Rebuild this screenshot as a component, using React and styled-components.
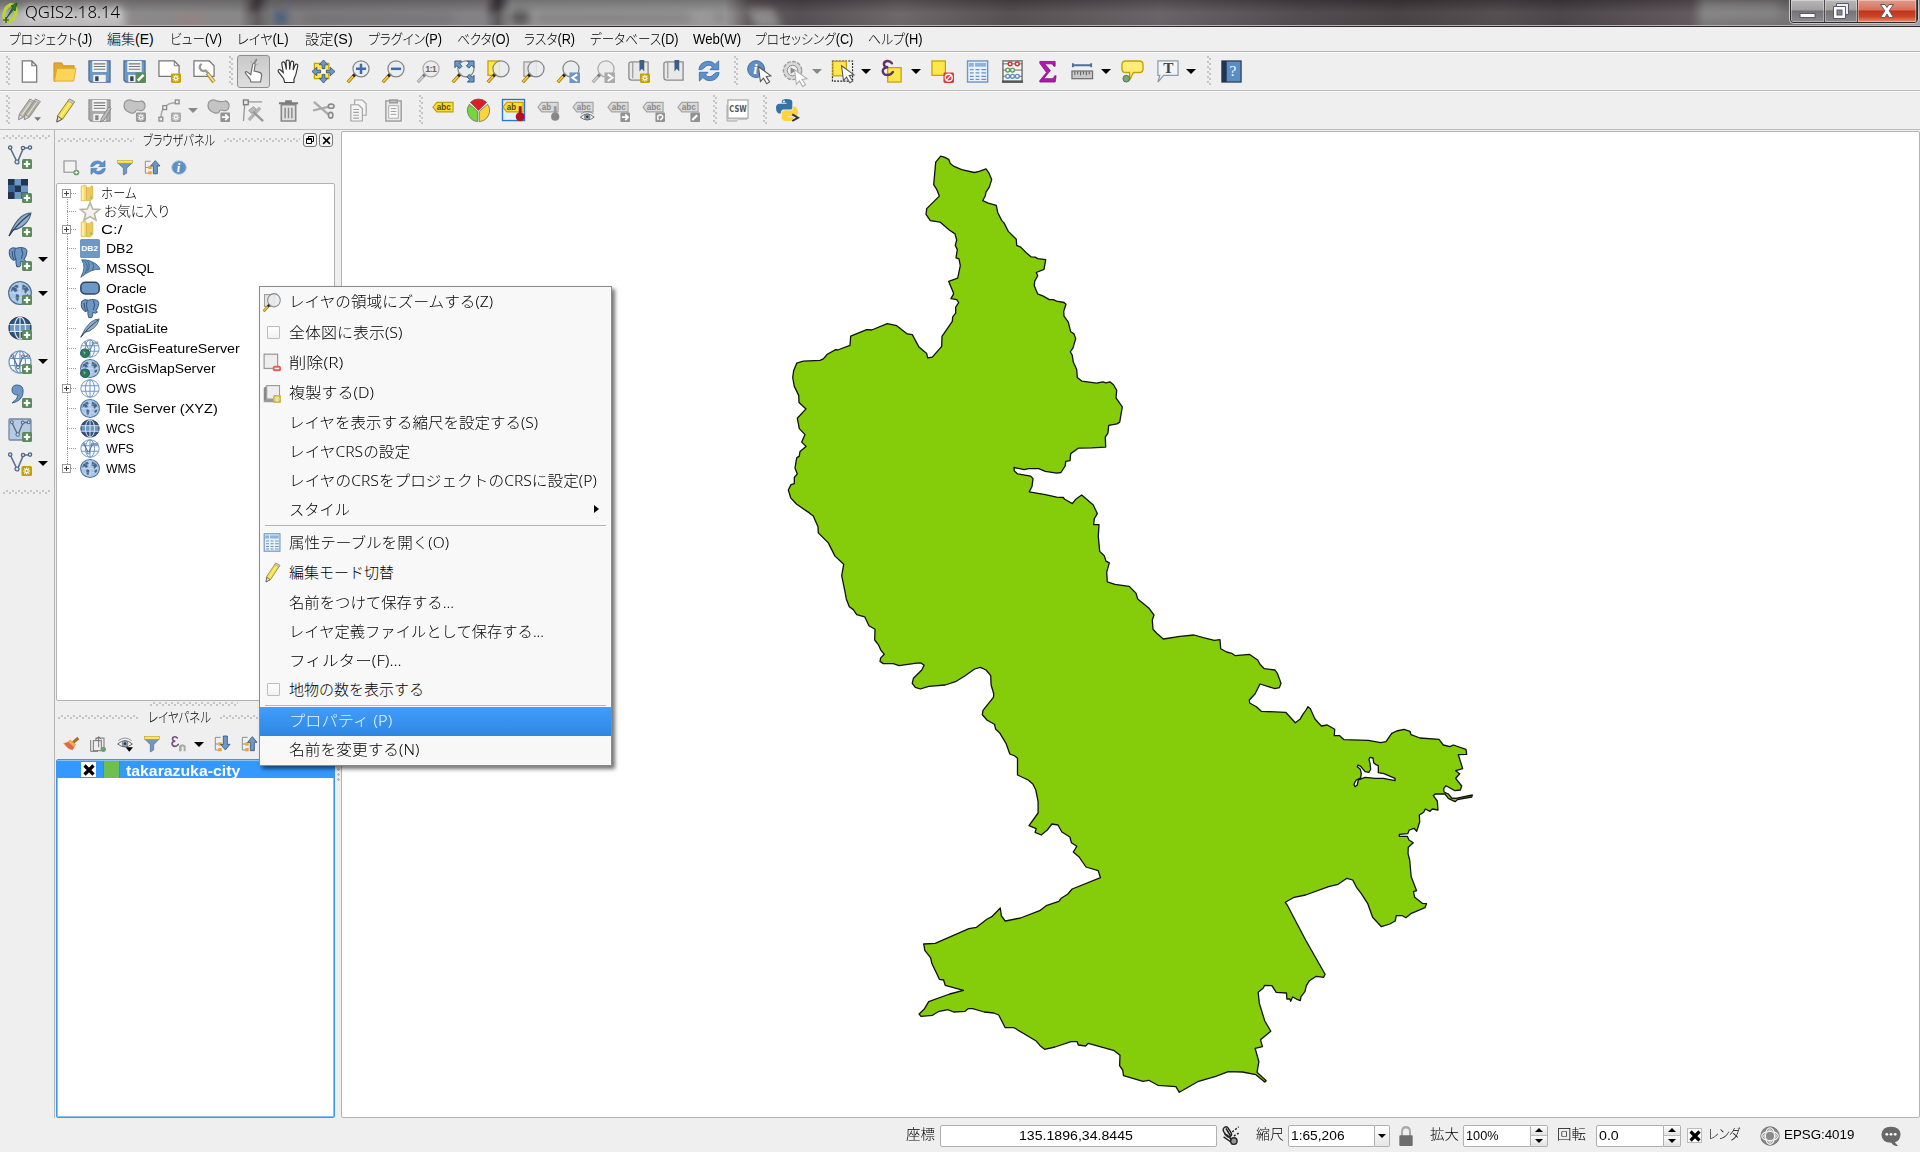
import React, { useLayoutEffect, useRef, useState } from "react";
import styled, { createGlobalStyle, css } from "styled-components";

const ui = `"Liberation Sans", "Noto Sans CJK JP", sans-serif`;
const menuFont = `"Noto Sans", "Noto Sans CJK JP", sans-serif`;

const Global = createGlobalStyle`
  * { box-sizing: border-box; }
  html, body { margin: 0; padding: 0; overflow: hidden; }
  body { font-family: ${ui}; font-size: 14px; font-weight: 300; color: #000; background: #efefef; }
  svg { display: block; flex: none; overflow: visible; }
`;

/* ---------- text fitted to a column width ---------- */
const FitBox = styled.span`
  display: block;
  flex: none;
  width: ${(p) => p.$w}px;
  white-space: pre;
  line-height: 1.2;
  font-feature-settings: ${(p) => (p.$palt ? '"palt"' : "normal")};
`;
const FitInner = styled.span`
  display: inline-block;
  transform-origin: 0 50%;
`;
function Fit({ w, palt, children, className }) {
  const ref = useRef(null);
  const [s, setS] = useState(1);
  useLayoutEffect(() => {
    if (ref.current) setS(w / ref.current.offsetWidth);
  }, [w]);
  return (
    <FitBox $w={w} $palt={palt} className={className}>
      <FitInner ref={ref} style={{ transform: `scaleX(${s})` }}>{children}</FitInner>
    </FitBox>
  );
}

/* ---------- icon pieces ---------- */
const G = "#5a8c5a";
const B = "#6d97c4";
const BD = "#3c5f88";
const Y = "#fde74c";
const YD = "#c4a000";

const PlusBadge = () => (
  <g>
    <rect x="14" y="14" width="10" height="10" rx="1.5" fill={G} />
    <path d="M19 15.8v6.400M15.800 19h6.400" stroke="#fff" strokeWidth="2.2" />
  </g>
);
const StarBadge = ({ c = YD }) => (
  <g>
    <rect x="13.500" y="14" width="10.500" height="10" rx="1.500" fill={c} />
    <path d="M18.700 15.400v7.200M15.200 19h7M16.200 16.400l5 5.200M21.200 16.400l-5 5.200" stroke="#fff" strokeWidth="1.100" />
    <circle cx="18.700" cy="19" r="1" fill={c} />
  </g>
);
const Mag = ({ gray, children }) => (
  <g>
    <path d="M.8 23.200L8.600 14.600" stroke={gray ? "#999" : "#8a6a10"} strokeWidth="3.400" />
    <path d="M1 22.800L6.400 17" stroke={gray ? "#ccc" : "#fcc52c"} strokeWidth="2" />
    <path d="M6.500 17l3-3.200" stroke={gray ? "#777" : "#222"} strokeWidth="3" />
    <circle cx="14.600" cy="9.200" r="8.400" fill={gray ? "#ebebeb" : "#e9ecee"} fillOpacity=".85" stroke={gray ? "#aaa" : "#858585"} strokeWidth="1.300" />
    {children}
  </g>
);
const Cursor = ({ x = 10, y = 6, c = "#555" }) => (
  <path transform={`translate(${x} ${y})`} d="M0 0l13 9.500-5 .8 3.600 5.600-3 1.800-3.400-5.800-3.200 3.500z" fill="#fff" stroke={c} strokeWidth="1.100" />
);
const VLine = () => (
  <g fill="none">
    <path d="M2.500 3.500L9 17M10 16L15 4M16 3h5" stroke="#566f8d" strokeWidth="1.600" />
    <g fill="#d5e2f0" stroke="#4d6580" strokeWidth="1.200">
      <circle cx="2.200" cy="2.600" r="1.700" /><circle cx="15" cy="3" r="1.700" />
      <circle cx="22" cy="2.600" r="1.700" /><circle cx="9" cy="17" r="2" />
    </g>
  </g>
);
const GlobeLand = () => (
  <g>
    <circle cx="12" cy="12" r="11.300" fill="#a9c6e6" stroke="#4d6f98" strokeWidth="1.300" />
    <path d="M4 6.500q3-3 5.500-2.500l1 2-2 2 1 2-2.500 1-2-2-2.500 2zM8 13l3 1 .5 2.500-2 4-2-3zM14.500 3.500l4.500 2 2 3.500-2 1-1 3-1.500-1 0-3-3-1 1-2.500zM17 15l3-2 .5 2.500-2.500 2.500z" fill="#45658c" />
    <path d="M1 12h22M12 1v22M4 5q8 5 16 0M4 19q8-5 16 0" stroke="#fff" strokeOpacity=".4" fill="none" strokeWidth=".8" />
  </g>
);
const GlobeGrid = ({ dark }) => (
  <g fill="none" stroke={dark ? "#dfeaf6" : "#6d97c4"} strokeWidth="1.200">
    <circle cx="12" cy="12" r="11" fill={dark ? "#33557f" : "#f8fbff"} stroke={dark ? "#29405f" : "#6d97c4"} />
    {dark && <path d="M2 9h20v6H2z" fill="#6d97c4" stroke="none" />}
    <ellipse cx="12" cy="12" rx="5.500" ry="11" /><path d="M1.500 8.500h21M1.500 15.500h21M12 1v22" />
  </g>
);
const Elephant = () => (
  <g stroke="#2c4a6e" strokeWidth="1.100" fill={B}>
    <path d="M2 3q3-3.500 8-1.500Q14 0 18 1q5 1 4.500 5-.5 5-3.500 9l2 1.500-2.500 1.500-3-1q0 5-1.500 6.500h-3.500q-1.500-4-1-9-2 2-4 1Q0 11 2 3z" />
    <path d="M8.500 2q-1.500 5 0 10l1 2.500M16 2q3 5 0 12M5 5q0 6 2 10" fill="none" />
  </g>
);
const Feather = () => (
  <g>
    <path d="M1 23Q6 10 13 4q5-4 10-4-1 6-6 11-5 5-12 6z" fill="#8fb0d4" stroke="#4a5f7a" strokeWidth="1.100" />
    <path d="M1 23Q9 11 22 1" stroke="#333f50" strokeWidth="1.200" fill="none" />
  </g>
);
const Label = ({ c = "#dadada", s = "#a5a5a5", t = "abc", tc = "#888" }) => (
  <g>
    <path d="M5 3.500h17v10H5L1 8.500z" fill={c} stroke={s} strokeWidth="1.200" />
    <text x="5" y="11.400" fontSize="8.500" fontWeight="700" fontFamily="Liberation Sans" fill={tc} textLength={t.length * 4.900} lengthAdjust="spacingAndGlyphs">{t}</text>
  </g>
);
const Blob = () => (
  <path d="M2 3q4-3.500 8-1 5 1.500 9 0 4.500 1 4 6-1 5-6 4-3-1.500-4 1-1 2.500-5 1.500Q-1.500 11 2 3z" fill="#c4c4c4" stroke="#959595" strokeWidth="1.200" />
);
const GrayBadge = ({ children }) => (
  <g><rect x="14" y="14" width="10" height="10" rx="1" fill="#929292" />{children}</g>
);
const Pencil = ({ c1 = "#f5dc4a", c2 = "#8a7a30", tip = "#444" }) => (
  <g>
    <path d="M17 0l5.500 3L10 21l-6 3 1-7z" fill={c1} stroke={c2} strokeWidth="1" />
    <path d="M19.500 2L7.500 19" stroke="#fff8b0" strokeOpacity=".7" strokeWidth="1.400" />
    <path d="M5 18L4 24l5.500-3z" fill="#ddd" stroke={tip} strokeWidth=".8" /><path d="M15.800 2l5.200 3 1.500-2L17 0z" fill="#ccc" stroke="#888" strokeWidth=".6" />
  </g>
);
const Bubble = ({ fill, stroke }) => <path d="M5 1h14q4 0 4 4v4q0 4-4 4h-6l-4 8 0-8H5q-4 0-4-4V5q0-4 4-4z" fill={fill} stroke={stroke} strokeWidth="1.400" />;
const Refresh = () => (
  <g fill="#5f92cc" stroke="#386aa6" strokeWidth=".9">
    <path d="M1 10.500Q2 2 11 1.400q5 0 7.600 3.400L22.500 1v9.600H13l3-3Q11 3 6.200 9q-1 1.500-5.200 1.500z" />
    <path d="M23 13.500Q22 22 13 22.600q-5 0-7.600-3.400L1.500 23v-9.600H11l-3 3q5 4.600 9.800-1.400 1-1.500 5.200-1.500z" />
  </g>
);
const Floppy = ({ gray }) => (
  <g>
    <path d="M1 1h22v22H3l-2-2z" fill={gray ? "#a9a9a9" : B} stroke={gray ? "#929292" : "#4a6c96"} strokeWidth="1.300" />
    <rect x="4.500" y="1" width="15" height="11.500" fill="#f3f3f3" />
    <path d="M6 4h12M6 6.800h12M6 9.600h12" stroke="#777" strokeWidth="1.200" />
    <rect x="5.500" y="15.500" width="13" height="7.500" fill="#f1f1f1" /><rect x="7.500" y="17" width="3.500" height="5" fill={gray ? "#888" : "#345"} />
  </g>
);
const Book = () => (
  <g><path d="M2 4q0-2 3-2h17v19H5q-3 0-3-3z" fill="#e9e9e9" stroke="#8c8c8c" strokeWidth="1.400" /><path d="M6 2v17" stroke="#9b9b9b" strokeWidth="1.300" /><path d="M13 0h5v12l-2.500-3-2.500 3z" fill={BD} /></g>
);
const Sq = ({ x = 1, y = 2 }) => <rect x={x} y={y} width="14" height="15" fill={Y} stroke={YD} strokeWidth="1.300" />;
const Table = () => (
  <g><rect x="1.600" y="1" width="21" height="22" fill="#e9f2fb" stroke={B} strokeWidth="1.500" /><path d="M3 3h18v4H3z" fill="#8db3dc" /><path d="M4 10h4M10 10h4M16 10h5M4 13.500h4M10 13.500h4M16 13.500h5M4 17h4M10 17h4M16 17h5M4 20.300h4M10 20.300h4M16 20.300h5" stroke="#6b92bf" strokeWidth="1.300" /><path d="M8.700 2.500v5" stroke="#fff" /></g>
);
const Eye = ({ c = "#666" }) => (
  <g><path d="M1 12Q12 2 23 12 12 21 1 12z" fill="#f6f6f6" stroke={c} strokeWidth="1.500" /><circle cx="12" cy="11.500" r="4.500" fill="#86a9cc" stroke={c} /><circle cx="12" cy="11.500" r="2" fill="#333" /><path d="M2 7Q12-1 22 7" stroke={c} fill="none" /></g>
);
const TreeArrow = ({ up }) => (
  <g><path d="M2 2h8M2 2v19h9M2 12h5" stroke="#888" fill="none" strokeWidth="1.400" /><rect x="6.500" y="9.500" width="5" height="5" fill="#f2a12e" /><rect x="6.500" y="18" width="5" height="5" fill="#f2a12e" /><path transform={up ? "" : "matrix(1 0 0 -1 0 22)"} d="M17 1l7 8.500h-4V22h-6V9.500h-4z" fill="#6d97c4" stroke="#34567f" strokeWidth="1.300" /></g>
);
const Funnel = () => (<g><path d="M1.500 5h21l-8 8v8l-5 3V13z" fill={B} stroke="#4a6f9a" strokeWidth="1" /><rect x="1" y="1" width="22" height="4" fill={Y} stroke="#b79e1c" strokeWidth=".9" /></g>);
const Hand = () => (
  <path d="M8 23.500l-1-4-5.500-7q-1-3 1.500-2.500L6.500 13 5 4q0-2 1.500-2T8.500 4l1.300 6L9.500 2q0-2 1.700-2t1.700 2l.3 8 1-7q.4-2 1.900-1.800 1.600.3 1.300 2.300l-.6 7 2-5q.8-1.500 2.100-1 1.200.6.7 2.200L19.700 15l-2 5v3.500z" fill="#fff" stroke="#333" strokeWidth="1.200" />
);

const ICONS = {
  newDoc: <path d="M4.500 1h10l5 5v17h-15zM14.500 1v5h5" fill="#fff" stroke="#777" strokeWidth="1.300" />,
  open: <g><path d="M1 3h8l2 3h11v4H5L3 22H1z" fill="#dfa92b" stroke="#c8921e" /><path d="M4 9h20l-2.500 13H1.500z" fill="#fbd458" stroke="#e0ab2e" /></g>,
  save: <Floppy />,
  saveAs: <g><Floppy /><rect x="13" y="13" width="11" height="11" rx="1.500" fill={G} /><path d="M15.500 21.500l6-6" stroke="#fff" strokeWidth="2.500" /></g>,
  composer: <g><path d="M1 1h16l5 5v11H1z" fill="#fff" stroke="#777" strokeWidth="1.300" /><path d="M17 1v5h5" fill="none" stroke="#777" /><StarBadge /></g>,
  manager: <g><path d="M1 1h16l5 5v11H1z" fill="#fff" stroke="#777" strokeWidth="1.300" /><path d="M9 4q-4 3 0 7 2 1 4 0l3 3" fill="none" stroke="#999" strokeWidth="2.500" /><path d="M15 14l7 9" stroke="#a88a2a" strokeWidth="4" /><path d="M15.500 14.500l6.500 8" stroke="#f4dc88" strokeWidth="2" /></g>,
  touch: <g><path d="M8.500 24q0-3-3-6l-3-4q0-2 2-1l4 3 2-11q.5-2 2-1.500 1 .5.600 2.500l-1 6 6 1.500q3 1 2 5l-1 5.500z" fill="#fff" stroke="#666" strokeWidth="1.200" /><path d="M12 4l3-5" stroke="#888" strokeWidth="2" /><path d="M10 3.500q-2-1-1-3M14 5q2 0 3-1" stroke="#aaa" fill="none" /></g>,
  hand: <Hand />,
  panSel: <g><rect x="2.500" y="3.500" width="15" height="16" fill={Y} stroke={YD} strokeWidth="1.300" /><path d="M12 1.500v21M1.500 12h21" stroke="#fff" strokeWidth="5" strokeOpacity=".7" /><g fill={B} stroke="#32527a" strokeWidth=".9"><path d="M12 0l4.500 5h-3v4h-3V5h-3zM12 24l4.500-5h-3v-4h-3v4h-3zM0 12l5-4.500v3h4v3H5v3zM24 12l-5-4.500v3h-4v3h4v3z" /></g></g>,
  zoomIn: <Mag><path d="M14.600 4v10.500M9.400 9.200h10.500" stroke="#3a6ca8" strokeWidth="2.600" /></Mag>,
  zoomOut: <Mag><path d="M9.400 9.200h10.500" stroke="#3a6ca8" strokeWidth="2.600" /></Mag>,
  zoomOne: <Mag gray><text x="8.700" y="12.800" fontSize="9.500" fontWeight="700" fill="#666" fontFamily="Liberation Sans" textLength="12">1:1</text></Mag>,
  zoomFull: <g><Mag /><g fill={B} stroke="#34567f" strokeWidth="1"><path d="M3 1h7L7.500 3.500l3 3-2.500 2.500-3-3L3 8zM23 1v7l-2.500-2.500-3 3L15 6l3-3-2-2zM23 23h-7l2.500-2.500-3-3L18 15l3 3 2-2z" /></g></g>,
  zoomSel: <g><rect x="1" y="1" width="12" height="15" fill={Y} stroke={YD} strokeWidth="1.300" /><Mag /></g>,
  zoomLayer: <g><rect x="2" y="2" width="13" height="15" fill="#e4e4e4" stroke="#999" strokeWidth="1.300" /><Mag /></g>,
  zoomLast: <g><Mag /><rect x="13" y="13" width="11" height="11" fill={B} /><path d="M21 15l-5 3.500 5 3.500" stroke="#fff" strokeWidth="2" fill="none" /></g>,
  zoomNext: <g><Mag gray /><rect x="13" y="13" width="11" height="11" fill="#aaa" /><path d="M16.500 15l5 3.500-5 3.500" stroke="#fff" strokeWidth="2" fill="none" /></g>,
  bookNew: <g><Book /><StarBadge /></g>,
  book: <Book />,
  refresh: <Refresh />,
  identify: <g><circle cx="9.500" cy="9.500" r="8.800" fill="#5f8fc4" stroke="#41699a" /><text x="6.500" y="15" fontSize="16" fontStyle="italic" fontWeight="700" fontFamily="Liberation Serif" fill="#fff">i</text><Cursor x={12} y={7} /></g>,
  action: <g><circle cx="11" cy="11" r="9.500" fill="#d9d9d9" stroke="#9c9c9c" strokeWidth="1.500" strokeDasharray="4 1.500" /><circle cx="11" cy="11" r="5.500" fill="#eee" stroke="#888" /><path d="M9 7.500l5 3.500-5 3.500z" fill="#888" /><Cursor x={13} y={10} c="#aaa" /></g>,
  select: <g><rect x="1.500" y="1" width="21" height="21" fill="none" stroke="#222" strokeDasharray="2 1.300" strokeWidth="1.200" /><Sq x={2} y={1.500} /><Cursor x={11} y={6} /></g>,
  selExp: <g><Sq x={7} y={8} /><path d="M11.500 3.500Q9.500.8 6.500 1 2.800 1.500 3 4.500q.4 3 4.500 3Q2 7.800 1.800 11.500 2 15.500 6.500 15.700q4 0 6-3.200" fill="none" stroke="#5c3566" strokeWidth="2.500" strokeLinecap="round" /></g>,
  deselect: <g><Sq x={1} y={1} /><rect x="13" y="13" width="11" height="11" rx="1.500" fill="#dc3a3a" /><circle cx="18.500" cy="18.500" r="3.600" fill="none" stroke="#fff" strokeWidth="1.400" /><path d="M16 21l5-5" stroke="#fff" strokeWidth="1.400" /></g>,
  table: <Table />,
  abacus: <g><path d="M2 1h20v22H2z" fill="#f4f4f4" stroke="#888" strokeWidth="1.800" /><path d="M2 4h20M2 10.500h20M2 17h20" stroke="#666" /><g fill="#fff" strokeWidth="1.500"><g stroke="#d03030"><circle cx="9.500" cy="4" r="2" /><circle cx="17" cy="4" r="2" /></g><g stroke="#55a055"><circle cx="7" cy="10.500" r="2" /><circle cx="12" cy="10.500" r="2" /></g><g stroke="#5f8fbf"><circle cx="7" cy="17" r="2" /><circle cx="12" cy="17" r="2" /><circle cx="17" cy="17" r="2" /></g></g><path d="M1 22.500h22" stroke="#555" strokeWidth="2.500" /></g>,
  sigma: <path d="M4 1.500h16v5h-1.500q-.5-2.500-3-2.500H9l6 7-7 8.500h8q3 0 3.500-3H21l-1 6.500H4v-1.500l7-8.500-7-9.500z" fill="#ad1aad" stroke="#7c0d7c" strokeWidth=".8" />,
  measure: <g><path d="M1.500 5.500h20M2 3.500v4M21 3.500v4" stroke="#4c7099" strokeWidth="2" /><rect x="1" y="11.500" width="21.500" height="8" fill="#c9c9c9" stroke="#707070" strokeWidth="1.300" /><path d="M4 12v3.500M7 12v3M10 12v4M13 12v3M16 12v4M19 12v3" stroke="#555" /></g>,
  tip: <g><Bubble fill="#fbee7a" stroke="#c4a000" /><circle cx="5.500" cy="19.500" r="3.500" fill="#76a876" stroke="#4d7a4d" /></g>,
  textAnn: <g><path d="M2 1h21v15H8l-6 7 2-7H2z" fill="#f0f5f9" stroke="#8e9aa5" strokeWidth="1.300" /><text x="7.500" y="14" fontSize="16" fontWeight="700" fontFamily="Liberation Serif" fill="#444">T</text></g>,
  help: <g><rect x="2" y="1" width="20" height="22" fill="#5c8cc4" stroke="#23364f" strokeWidth="1.200" /><path d="M2 1h5v22H2z" fill="#1f3550" /><text x="10" y="17" fontSize="16" fontFamily="Liberation Serif" fill="#fff">?</text></g>,
  edits: <g><g transform="translate(-3 0) scale(.9)"><Pencil c1="#b5b5b5" c2="#888" tip="#888" /></g><g transform="translate(3 0) scale(.9)"><Pencil c1="#aaa" c2="#888" tip="#888" /></g><path d="M17 19h7l-3.500 4z" fill="#777" /></g>,
  pencil: <Pencil />,
  saveEdits: <g><Floppy gray /><path d="M22 8l2 2-7 12-4 2 1-4z" fill="#bbb" stroke="#888" /></g>,
  addFeat: <g><Blob /><StarBadge c="#999" /></g>,
  addCurve: <g><path d="M3 21q0-17 16-17" fill="none" stroke="#aaa" strokeWidth="1.500" /><g fill="#eee" stroke="#888" strokeWidth="1.300"><rect x="1" y="19" width="4" height="4" /><rect x="5" y="7" width="4" height="4" /><rect x="18" y="1" width="4" height="4" /></g><StarBadge c="#aaa" /></g>,
  moveFeat: <g><Blob /><GrayBadge><path d="M15.500 19h6M19 16l3 3-3 3" stroke="#fff" strokeWidth="1.800" fill="none" /></GrayBadge></g>,
  node: <g><path d="M3 3L1.500 23M5 3h16" stroke="#999" strokeWidth="1.400" fill="none" /><rect x="1.500" y="1" width="5" height="5" fill="#e5e5e5" stroke="#777" strokeWidth="1.300" /><path d="M7 22L19 9" stroke="#b5b5b5" strokeWidth="3.600" /><path d="M9 11l13 12" stroke="#999" strokeWidth="2.600" /><path d="M7 12l5-4 3 3-5 4z" fill="#bbb" stroke="#999" /></g>,
  trash: <g><path d="M4.500 6h15v17h-15z" fill="#e0e0e0" stroke="#888" strokeWidth="1.700" /><path d="M2 4.500h20M8.500 2.500h7" stroke="#7d7d7d" strokeWidth="2.200" /><path d="M8.500 9v11M12 9v11M15.500 9v11" stroke="#8a8a8a" strokeWidth="1.500" /></g>,
  cut: <g fill="none" stroke="#8a8a8a" strokeWidth="1.700"><path d="M2 3l15 13M1 12l17-4" stroke="#aaa" strokeWidth="2.400" /><ellipse cx="20" cy="7.500" rx="3" ry="2.200" /><ellipse cx="19.500" cy="17" rx="2.300" ry="3" /></g>,
  copy: <g fill="#f4f4f4" stroke="#a3a3a3" strokeWidth="1.200"><path d="M8 1h8l4 4v12H8z" /><path d="M4 6h8l4 4v13H4z" /><path d="M6.500 11h6M6.500 14h6M6.500 17h6M6.500 20h6" /></g>,
  paste: <g fill="#e9e9e9" stroke="#999" strokeWidth="1.400"><rect x="4" y="2" width="16" height="21" /><rect x="8" y="1" width="8" height="3" fill="#bbb" /><path d="M7 7h10v13H7z" fill="#fafafa" strokeWidth=".8" /><path d="M9 10h6M9 13h6M9 16h6" strokeWidth="1" /></g>,
  label: <Label c="#fadb38" s="#c4a000" tc="#5b4a00" />,
  diagram: <g stroke="#555" strokeWidth=".7"><path d="M12 12L3.500 3.500a12 12 0 0117 0z" fill="#e01b24" /><path d="M11.200 13L2.500 5.500a11.500 11.500 0 008.700 18z" fill="#74d63c" /><path d="M12.800 13l8.700-7.500a11.500 11.500 0 01-8.700 18z" fill="#f9d43a" /></g>,
  labelPin: <g><rect x=".5" y=".5" width="23" height="22" fill="#e6f0fb" stroke="#2a75d6" strokeWidth="1.400" /><Label c="#fadb38" s="#c4a000" t="ab" tc="#5b4a00" /><path d="M17.500 7.500h3v8h-3z" fill="#a01020" /><circle cx="19" cy="18.500" r="4.700" fill="#b5121f" /></g>,
  labelPinG: <g><Label t="ab" /><path d="M17.500 7.500h3v8h-3z" fill="#999" /><circle cx="19" cy="18.500" r="4.300" fill="#888" /></g>,
  labelEye: <g><Label /><g transform="translate(8 11) scale(.66)"><Eye /></g></g>,
  labelMove: <g><Label /><GrayBadge><path d="M15.500 19h6M19 16l3 3-3 3" stroke="#fff" strokeWidth="1.800" fill="none" /></GrayBadge></g>,
  labelRot: <g><Label /><GrayBadge><path d="M17 22q-2-5 2-5.500 3 .5 2.500 3L19 22" stroke="#fff" strokeWidth="1.600" fill="none" /></GrayBadge></g>,
  labelEdit: <g><Label /><GrayBadge><path d="M16 22l5-5" stroke="#fff" strokeWidth="2.200" /></GrayBadge></g>,
  csw: <g><path d="M1 6v17h10l2-2h9" fill="#ddd" stroke="#aaa" /><rect x="2" y="1" width="21" height="19" fill="#fff" stroke="#aaa" strokeWidth="1.300" /><text x="3.500" y="13.500" fontSize="9" fontWeight="700" fontFamily="DejaVu Sans" textLength="18" lengthAdjust="spacingAndGlyphs" fill="#555">CSW</text></g>,
  python: <g><path d="M11 0q6 0 6 3v6q0 2-3 2H8q-3 0-3 4H3q-3-1-3-6 0-4 4-4h7V4H6V3q0-3 5-3z" fill="#3572a5" /><path d="M12 23q-6 0-6-3v-5q0-3 3-3h6q3 0 3-4h2q3 1 3 6 0 4-4 4h-7v1h6v1q0 3-6 3z" fill="#ffd43b" /><circle cx="8.300" cy="2.500" r="1" fill="#fff" /><path d="M17 16l6 3.500-6 3.500" fill="none" stroke="#333" strokeWidth="2" /></g>,
  vPlus: <g><VLine /><PlusBadge /></g>,
  vNew: <g><VLine /><StarBadge /></g>,
  raster: <g><path d="M0 0h20v20H0z" fill={B} /><path d="M0 0h6.500v6.500H0zM6.500 6.500H13V13H6.500zM13 0h7v6.500h-7zM0 13h6.500v7H0z" fill="#1f3550" /><path d="M13 13h7v7h-7zM0 6.500h6.500V13H0z" fill="#3f6594" /><PlusBadge /></g>,
  featherPlus: <g><Feather /><PlusBadge /></g>,
  pgPlus: <g><g transform="scale(.84)"><Elephant /></g><PlusBadge /></g>,
  globePlus: <g><GlobeLand /><PlusBadge /></g>,
  gridPlus: <g><GlobeGrid dark /><PlusBadge /></g>,
  wfsPlus: <g><GlobeGrid /><g transform="translate(3 4) scale(.78)"><VLine /></g><PlusBadge /></g>,
  comma: <g><path d="M9 1q7 0 6 8-1 8-11 10 6-4 6-8-6 0-6-5 0-5 5-5z" fill={B} stroke="#3f618b" /><PlusBadge /></g>,
  vBox: <g><rect x="1" y="1" width="22" height="21" rx="1" fill="#b5cbe2" stroke="#6f89a5" strokeWidth="1.300" /><g transform="translate(2 2) scale(.85)"><VLine /></g><PlusBadge /></g>,
  folder: <g><path d="M2 2l7-2q2 0 2 2v20l-2 1.500H2z" fill="#f8dd76" stroke="#d8b045" /><path d="M11 4h5l4-3q2 0 2 2v17l-4 3.500h-7z" fill="#eec758" stroke="#cfa63d" /><path d="M5 3v19" stroke="#fff3b8" strokeWidth="2.500" /><path d="M19 17v4" stroke="#5aa7e0" strokeWidth="1.500" /></g>,
  star: <path d="M12 .8l3.300 8 8.200.6-6.300 5.400 2 8.200-7.200-4.500L4.800 23l2-8.200L.5 9.400l8.200-.6z" fill="#f3f3ec" stroke="#b4b4a6" strokeWidth="1.900" />,
  db2: <g><rect x="0" y="0" width="24" height="24" rx="2" fill={B} /><text x="1.500" y="15" fontSize="9.500" fontWeight="700" fontFamily="Liberation Sans" fill="#fff" textLength="20" lengthAdjust="spacingAndGlyphs">DB2</text></g>,
  mssql: <g fill={B} stroke="#33557f" strokeWidth="1"><path d="M2 1q9 0 13 3 7 3 9 9-10-1-23 10Q8 10 2 1z" /><path d="M9 2.500q4 6 0 13M15 4.500q3 5 0 9M6 18Q12 9 5 2" fill="none" /></g>,
  oracle: <rect x="1" y="4" width="22" height="15" rx="5.500" fill={B} stroke="#2c4564" strokeWidth="1.800" />,
  pg: <Elephant />,
  feather: <Feather />,
  arcF: <g><GlobeGrid /><g transform="translate(5 3) scale(.7)"><VLine /></g><circle cx="6" cy="18" r="5.500" fill="#2c7a58" stroke="#204a70" /><path d="M4 15l3 2-2 3z" fill="#76c49a" /></g>,
  arcM: <g><GlobeLand /><circle cx="6" cy="18" r="5.500" fill="#2c7a58" stroke="#204a70" /><path d="M4 15l3 2-2 3z" fill="#76c49a" /></g>,
  ows: <GlobeGrid />,
  globe: <GlobeLand />,
  wcs: <GlobeGrid dark />,
  wfs: <g><GlobeGrid /><g transform="translate(3 4) scale(.78)"><VLine /></g></g>,
  addSel: <g><rect x="1.500" y="1.500" width="18" height="18" fill="#f2f2f2" stroke="#888" strokeWidth="1.600" /><circle cx="20" cy="20" r="4.500" fill="#6ea06e" /><path d="M20 17.500v5M17.500 20h5" stroke="#fff" strokeWidth="1.300" /></g>,
  funnel: <Funnel />,
  treeUp: <TreeArrow up />,
  treeDown: <TreeArrow />,
  info: <g><circle cx="12" cy="12" r="11" fill="#5f8fc4" stroke="#b8cde3" strokeWidth="1.500" /><text x="8.500" y="18.500" fontSize="19" fontStyle="italic" fontWeight="700" fontFamily="Liberation Serif" fill="#fff">i</text></g>,
  brush: <g><path d="M23 3l-8 7" stroke="#b06a20" strokeWidth="4.500" /><path d="M11 6l8 7-5 7q-7 0-13-9 6 0 7-3z" fill="#f1b04b" stroke="#d89a4a" /><path d="M2 11q5 9 12 10l3-4-9-8z" fill="#e4674a" /></g>,
  group: <g fill="#eee" stroke="#777" strokeWidth="1.500"><rect x="9" y="3" width="12" height="15" /><rect x="5" y="7" width="12" height="15" /><path d="M1 6v17h11M13 1v16M9 5l4-4 4 4" fill="none" /><circle cx="20" cy="20" r="4" fill="#6ea06e" stroke="none" /></g>,
  eye: <g><Eye /><path d="M13 17h11l-5.500 6.500z" fill="#000" /></g>,
  eps: <g><path d="M9.500 3Q8 1 5.500 1.200 2 1.800 2.300 4.800q.5 3 4.200 3-5 .2-5 3.700.5 4 4.500 4 3 0 5-3" fill="none" stroke="#75507b" strokeWidth="2.400" strokeLinecap="round" /><path d="M12 23v-8q5-5 10 0v8h-3v-7h-3v7z" fill="#aaa" /></g>,
  remove: <g><rect x="1.500" y="1.500" width="18" height="18" fill="#eee" stroke="#999" strokeWidth="1.600" /><rect x="13" y="16" width="11" height="7" rx="2.500" fill="#ee5a5a" /><path d="M15.500 19.500h6" stroke="#fff" strokeWidth="1.800" /></g>,
  dup: <g><path d="M1 5l4-3v17l-4 4z" fill="#888" /><path d="M1 23h17v-4H5z" fill="#999" /><rect x="5" y="2" width="17" height="17" fill="#eee" stroke="#999" strokeWidth="1.400" /><StarBadge c="#cdb84a" /></g>,
  tools: <g fill="none" stroke="#222" strokeWidth="1.800"><rect x="3" y="1" width="7" height="13" rx="3.500" transform="rotate(-35 6 7)" fill="#ddd" /><path d="M5 3l6 9M2 13l12 8M3 10q8 1 10 12" /><circle cx="15" cy="18" r="4" fill="#999" /><path d="M13 7l8-6M15 12l7-4" strokeDasharray="2.500 2" /></g>,
  lock: <g><path d="M6 12V7q0-5.500 6-5.500T18 7v5" fill="none" stroke="#aaa" strokeWidth="3" /><rect x="2" y="11" width="20" height="13" rx="1.500" fill="#6d6d6d" /></g>,
  crs: <g stroke="#fff" strokeWidth="1.300" fill="none"><circle cx="12" cy="12" r="11" fill="#8a8a8a" stroke="#777" /><ellipse cx="12" cy="12" rx="5.500" ry="10" /><ellipse cx="12" cy="12" rx="10" ry="5.500" /><path d="M12 4l8 8-8 8-8-8z" stroke="#ddd" /></g>,
  msg: <g><path d="M12 1q11 0 11.500 9-.5 8-7 9.500l4 4.500q-6 0-8-4Q1 20 .5 10.500 1 1 12 1z" fill="#686868" /><g fill="#fff"><circle cx="7" cy="10" r="1.700" /><circle cx="12" cy="10" r="1.700" /><circle cx="17" cy="10" r="1.700" /></g></g>,
};
const Icon = ({ n, s = 24, w }) => (
  <svg width={w || s} height={s} viewBox="0 0 24 24" preserveAspectRatio="none">{ICONS[n]}</svg>
);

/* ---------- window chrome ---------- */
const Window = styled.div`
  width: 1920px; height: 1152px; display: flex; flex-direction: column; background: #efefef; overflow: hidden;
`;
const TitleBar = styled.header`
  height: 27px; flex: none; display: flex; align-items: flex-start; padding-left: 2px; position: relative; overflow: hidden;
  border-bottom: 1px solid #2b272b;
  background:
    linear-gradient(rgba(30,26,30,.28), rgba(160,160,160,.14) 50%, rgba(160,160,160,.1)),
    linear-gradient(90deg, #8a8889 0, #858484 240px, #5a5356 257px, #777476 272px, #807e80 484px, #555053 498px, #939393 512px, #989898 725px, #5a5255 748px, #4b4448 800px, #665f62 900px, #4c4548 1010px, #625a5e 1160px, #473f44 1300px, #3d3638 1400px, #4a4346 1500px, #40383d 1560px, #584f54 1690px, #757374 1705px, #6e6c6d 1780px, #a3a1a3 1920px);
  &::after { content: ""; position: absolute; left: 0; right: 0; bottom: 0; height: 1px; background: #b7b2b5; }
`;
const Smudge = styled.i`
  position: absolute; left: ${(p) => p.$x}px; top: ${(p) => p.$y || 11}px; width: ${(p) => p.$w}px; height: ${(p) => p.$h || 14}px;
  background: ${(p) => p.$c || "#4c4c4e"}; filter: blur(4px); opacity: ${(p) => p.$o || 0.28};
  transform: skewX(${(p) => p.$skew || 0}deg);
`;
const TitleLabel = styled.div`
  position: relative; display: flex; gap: 7px; padding: 2px 0 0 0; font: 300 16px ${menuFont};
  text-shadow: 0 0 6px #fff, 0 0 10px #fff, 0 0 14px #ddd;
`;
const TitleText = styled.div`padding-top: 1px;`;
const WinButtons = styled.div`
  position: relative; z-index: 1; margin: -1px 2px 0 auto; display: flex; height: 24px; width: 128px;
  border: 1px solid #2c292c; border-radius: 0 0 4px 4px; box-shadow: 0 0 0 1px #c9c6c9; overflow: hidden;
`;
const WinButton = styled.div`
  width: ${(p) => p.$w}px; display: flex; align-items: center; justify-content: center;
  border-right: 1px solid #4c494c; box-shadow: inset 0 0 0 1px rgba(255,255,255,.35);
  background: ${(p) => p.$red ? "linear-gradient(#e09a8a 0,#d8705c 45%,#c03418 50%,#c8452a 75%,#ea8a68 100%)" : "linear-gradient(#b9b6b8 0,#a29fa1 45%,#757276 50%,#8e8a90 100%)"};
`;
const MenuBar = styled.nav`
  height: 25px; flex: none; display: flex; align-items: center; padding: 1px 0 0 9px; border-bottom: 1px solid #b5b5b5; font-size: 14px;
`;
const MenuItem = styled.div`width: ${(p) => p.$w}px; flex: none;`;
const Toolbar = styled.div`
  height: 39px; flex: none; display: flex; align-items: center; border-bottom: 1px solid #bcbcbc; box-shadow: inset 0 1px #fafafa;
`;
const dots = css`
  background-image: radial-gradient(circle at 1px 1px, #c5c5c5 1px, transparent 1.300px), radial-gradient(circle at 1px 1px, #c5c5c5 1px, transparent 1.300px);
`;
const Handle = styled.div`
  width: 14.500px; height: 30px; flex: none; display: flex; justify-content: flex-end; padding-right: ${(p) => (p.$first ? 4 : 2)}px;
  margin-right: ${(p) => (p.$first ? -3 : 0)}px;
  &::after { content: ""; width: 5px; ${dots} background-size: 5px 5px, 5px 5px; background-position: 0 0, 2px 2px; }
`;
const HGrip = styled.div`
  height: 5px; width: ${(p) => p.$w ? p.$w + "px" : "auto"}; flex: ${(p) => (p.$w ? "none" : "1")};
  margin-top: ${(p) => p.$mt || 0}px;
  ${dots} background-size: 6px 5px, 6px 5px; background-position: 0 2px, 3px 0;
`;
const Tool = styled.div`
  width: 35px; height: 35px; flex: none; display: flex; align-items: center; justify-content: center;
`;
const ToolActive = styled.div`
  width: 33px; height: 33px; display: flex; align-items: center; justify-content: center;
  border: 1px solid #8f8f8f; border-radius: 3px; background: linear-gradient(#c9c9c9, #dfdfdf);
`;
const Drop = styled.div`
  width: ${(p) => p.$w || 14.800}px; margin-left: ${(p) => p.$ml || 0}px; flex: none; display: flex; align-items: center; padding-left: 1px;
  &::after { content: ""; border: 5px solid transparent; border-top-color: ${(p) => p.$c || "#000"}; border-bottom: 0; }
`;

const Body = styled.div`flex: none; height: 988px; display: flex;`;
const SideBar = styled.aside`
  width: 55px; flex: none; border-right: 1px solid #b5b5b5; padding: 5px 3px 0; display: flex; flex-direction: column;
`;
const SideTool = styled.div`height: 34.100px; flex: none; display: flex; align-items: center; gap: 5px; padding-left: 5px;`;
const Docks = styled.section`width: 280px; flex: none; display: flex; flex-direction: column; padding-left: 1px;`;
const DockTitle = styled.div`
  height: ${(p) => p.$h || 20}px; flex: none; display: flex; align-items: center; gap: 9px; padding: 0 2px 0 2px; font-size: 14px;
`;
const DockButtons = styled.div`display: flex; gap: 2px; margin-left: -6px;`;
const DockButton = styled.div`
  width: 14px; height: 14px; border: 1px solid #777; border-radius: 3px; background: #f5f5f5; display: flex; align-items: center; justify-content: center;
`;
const DockTools = styled.div`height: ${(p) => p.$h}px; flex: none; display: flex; align-items: center; padding: ${(p) => p.$pt || 0}px 0 0 7px; gap: 11px;`;
const Tree = styled.div`
  height: ${(p) => p.$h}px; width: 279px; flex: none; background: #fff; overflow: hidden;
  padding-top: ${(p) => (p.$focus ? 1 : 0)}px;
  border: ${(p) => (p.$focus ? "1px solid #3b95ec" : "1px solid #b3b3b3")}; border-radius: 2px;
  box-shadow: ${(p) => (p.$focus ? "inset 0 0 0 1px #8cc0f5" : "none")};
`;
const TreeRow = styled.div`
  height: ${(p) => p.$h}px; display: flex; align-items: center; font-size: 13.500px;
`;
const TreeText = styled.div`padding-top: ${(p) => (p.$drop ? 2 : 0.500)}px;`;
const Branch = styled.div`
  width: 23px; align-self: stretch; flex: none; display: flex; align-items: center; padding-left: 5px;
  background:
    repeating-linear-gradient(90deg, #999 0 1px, transparent 1px 2px) 10px 50% / 9px 1px no-repeat,
    repeating-linear-gradient(#999 0 1px, transparent 1px 2px) 10px ${(p) => (p.$first ? "100%" : "0")} / 1px ${(p) => (p.$first || p.$last ? "50%" : "100%")} no-repeat;
`;
const Expander = styled.div`
  width: 9px; height: 9px; border: 1px solid #999;
  background: linear-gradient(#444,#444) 50% 50% / 5px 1px no-repeat, linear-gradient(#444,#444) 50% 50% / 1px 5px no-repeat, #fff;
`;
const IconCell = styled.div`width: ${(p) => p.$w}px; flex: none;`;
const Splitter = styled.div`height: 9px; flex: none; display: flex; justify-content: center; padding: 1px 3px 0 0;`;
const LayerRow = styled.div`
  height: 17px; display: flex; align-items: stretch; background: #3399ff; color: #fff; overflow: hidden;
`;
const LayerBranch = styled.div`width: 24px; &::after { content: ""; display: block; width: 10px; height: 9px; margin-left: 10px; border-left: 1px dotted #b87b3f; border-bottom: 1px dotted #b87b3f; }`;
const CheckX = styled.div`
  width: 15px; height: 15px; flex: none; align-self: center; background: #fff; border: 1px solid ${(p) => p.$b || "#fff"}; display: flex; align-items: center; justify-content: center;
`;
const Swatch = styled.div`width: 17px; margin-left: 7px; background: #6dbf52; border: 1px solid #4e9e3a; border-width: 0 1px;`;
const LayerName = styled.div`
  flex: 1; margin-left: 3px; border: 1px dotted #d9781e; padding: 1px 0 0 2px; font: bold 14px "Liberation Sans", sans-serif;
`;
const VSplit = styled.div`
  width: 6px; flex: none; display: flex; align-items: center; justify-content: center; padding-top: 296px;
  &::after { content: ""; width: 3px; height: 18px; background: radial-gradient(circle at 1.500px 1.500px, #bbb 1.100px, transparent 1.500px) 0 0 / 3px 5px; }
`;
const MapFrame = styled.main`
  flex: 1; margin-top: 1px; background: #fff; border: 1px solid #b3b3b3; border-radius: 2px; overflow: hidden;
`;

const StatusBar = styled.footer`
  flex: 1; display: flex; align-items: center; padding: 1px 0 0 906px; font-size: 13.500px;
`;
const Spacer = styled.div`width: ${(p) => p.$w}px; flex: none;`;
const Field = styled.div`
  height: 22px; width: ${(p) => p.$w}px; flex: none; display: flex; align-items: center; padding: 1px 0 0 ${(p) => p.$pl || 2}px;
  background: #fff; border: 1px solid #b0b0b0; border-radius: ${(p) => (p.$join ? "2px 0 0 2px" : "2px")};
`;
const Combo = styled.div`
  width: 15px; height: 22px; border: 1px solid #b0b0b0; border-left: 0; border-radius: 0 2px 2px 0; background: linear-gradient(#fff, #e6e6e6);
  display: flex; align-items: center; justify-content: center;
  &::after { content: ""; border: 4px solid transparent; border-top-color: #000; border-bottom: 0; }
`;
const Spin = styled.div`
  width: 17px; height: 22px; border: 1px solid #b0b0b0; border-left: 0; border-radius: 0 2px 2px 0; display: flex; flex-direction: column;
`;
const SpinHalf = styled.div`
  flex: 1; display: flex; align-items: center; justify-content: center; background: linear-gradient(#fdfdfd, #e2e2e2);
  border-top: ${(p) => (p.$up ? "0" : "1px solid #bbb")};
  &::after { content: ""; border: 4px solid transparent; ${(p) => (p.$up ? "border-bottom-color: #000; border-top: 0;" : "border-top-color: #000; border-bottom: 0;")} }
`;

/* ---------- context menu, floating over the panels ---------- */
const Popup = styled.div`
  position: absolute; left: 259px; top: 286px; width: 353px; height: 480px; background: #f8f8f8; border: 1px solid #8a8a8a;
  box-shadow: 3px 3px 4px rgba(0,0,0,.55); font: 300 15px ${menuFont};
`;
const PopupRow = styled.div`
  height: ${(p) => (p.$tall ? 30.400 : 29)}px; display: flex; align-items: center; padding: 0 5px 2px 0;
  ${(p) => p.$on && css`color: #eaf4ff; background: linear-gradient(#429dfb, #2d87e2);`}
`;
const PopupIcon = styled.div`width: 29px; flex: none; padding-left: ${(p) => (p.$check ? 7 : 3)}px; padding-top: 2px;`;
const PopupCheck = styled.div`width: 13px; height: 13px; border: 1px solid #bdbdbd; border-radius: 1px; background: linear-gradient(#fff, #f1f1f1);`;
const PopupSep = styled.div`height: 2.800px; padding-top: ${(p) => (p.$up ? 0 : 1)}px; margin: 0 5px; &::after { content: ""; display: block; height: 1px; background: #b5b5b5; }`;
const SubArrow = styled.i`margin-left: auto; margin-right: 7px; border: 4.500px solid transparent; border-left: 5.500px solid #000; border-right: 0;`;

/* ---------- map data ---------- */
const north = "512,45 523,48 536,54 541,66 552,74 575,83 613,91 628,88 648,81 657,93 665,111 658,132 648,146 646,156 638,170 655,177 679,183 683,203 695,225 702,232 715,256 739,278 740,295 752,300 768,315 783,327 795,328 803,332 827,335 822,362 799,371 803,380 794,395 793,408 803,431 820,437 838,447 850,447 860,451 882,455 888,460 881,480 882,493 895,510 902,537 912,543 917,556 909,582 901,593 907,603 910,622 920,643 922,665 935,675 980,681 998,677 1008,680 1020,677 1031,686 1040,701 1038,722 1057,747 1049,790 1041,795 1016,799 1014,820 1006,832 1007,860 965,862 925,863 902,878 900,898 887,900 886,912 873,931 860,933 826,928 806,920 775,920 763,923 732,917 733,927 743,935 782,941 789,948 786,970 778,985 826,993 860,1000 880,1001 884,1006 907,1018 917,1006 935,994 970,1022 982,1046 973,1060 971,1077 987,1077 985,1110 989,1152 1003,1164 1008,1179 1018,1184 1010,1210 1012,1237 1035,1244 1078,1250 1098,1269 1103,1285 1136,1310";
const east = "102,165 97,180 99,208 110,220 130,237 180,229 222,225 250,233 283,241 300,239 302,266 320,276 335,280 346,287 388,283 413,300 420,313 433,326 465,330 472,340 483,370 478,383 465,386 420,372 405,402 388,420 389,429 410,441 424,454 497,457 526,488 540,478 548,464 558,450 564,440 571,446 585,477 604,498 622,495 644,508 643,527 659,527 672,539 745,541 782,548 798,545 815,520 830,513 852,508 870,514 873,524 900,534 957,538 970,555 990,560 1000,555 1038,568 1040,583 1015,584 1028,626 1007,632 1019,641 1007,655 1025,678 1021,690 1005,692 978,677 971,686 972,696 985,702 995,714 1008,715 1057,705 1055,711 1012,719 1005,725 985,715 975,702 945,702 940,707 952,723 954,750 937,747 930,754 916,747 911,757 898,765 899,785 890,814 882,805 868,810 863,821 838,823 838,829 862,829 867,840 880,848 865,862 864,880";
const south = "1332,660 1336,710 1350,752 1342,755 1345,772 1365,790 1376,791 1372,803 1335,821 1322,833 1313,827 1297,827 1294,843 1280,852 1258,860 1235,832 1222,790 1205,760 1193,742 1183,720 1168,715 1145,733 1120,740 1060,765 1030,772 1007,787 1013,797 1060,900 1111,1003 1107,1012 1088,1009 1070,1022 1062,1037 1058,1055 1048,1070 1046,1082 1038,1078 1026,1071 1021,1084 1019,1077 1011,1077 1010,1059 983,1057 972,1037 953,1036 949,1045 936,1057 939,1090 953,1142 969,1174 942,1199 947,1220 928,1225 938,1265 933,1297 957,1322 953,1326 930,1304 895,1296 858,1295 825,1309 778,1325 730,1357 721,1340 674,1336 650,1321 635,1324 584,1307 582,1290 574,1277 575,1246 560,1232 492,1210 485,1218 466,1215 463,1205 447,1205 405,1221 378,1228 366,1217 355,1202 298,1163 275,1163 258,1125 245,1119 220,1116 190,1106 178,1106 170,1114 140,1116 125,1109 100,1115 85,1126 55,1129 50,1122 63,1108 75,1085 130,1062 166,1051 118,1036 114,1020 103,1018 83,970 80,953 65,932 62,912 92,910 180,866 200,862 228,837 240,830 262,804 265,828 275,843 315,834 365,812 382,797 415,784 421,775 438,763 450,747 524,713 518,692 486,681 468,651 453,636 462,619 448,608 444,591 423,576 413,555 397,552 385,570 369,585 353,577 356,566 337,557 361,519 361,485 355,450 347,432 335,420 307,405 307,355 300,348 287,342 277,310 260,278 250,268 247,253 228,241 215,224 217,211 244,172 245,162 238,135 237,107 225,90 210,82 195,87 170,107 145,125 118,135 75,139 53,147 40,142 32,130 35,115 57,90 63,76 55,69";
const west = "440,1465 387,1472 370,1466 340,1466 330,1460 332,1450 343,1440 333,1429 325,1413 314,1400 315,1370 297,1360 284,1335 260,1329 250,1315 238,1307 229,1285 225,1265 215,1220 221,1188 195,1165 175,1128 145,1100 144,1083 130,1053 118,1044 80,1020 62,1002 55,980 63,965 73,962 73,945 82,935 75,918 80,890 88,885 90,872 108,858 95,846 105,825 88,808 82,779 108,753 87,735 86,715 73,690 68,665 71,645 80,625 100,619 150,617 160,613 172,600 197,587 203,588 240,575 242,549 290,531 305,532 352,514 380,520 412,543 427,545 447,580 470,598 473,610 487,608 515,578 516,550 547,508 548,495 557,485 557,468 566,455 560,447 543,444 551,430 536,396 563,387 571,352 567,333 558,330 562,307 556,295 560,280 555,263 538,252 510,230 481,226 468,208 470,192 508,157 500,138 491,125 497,62";
const lake = "750,592 759,594 761,608 768,614 775,617 775,638 792,641 825,655 825,662 790,655 765,655 735,652 715,660 712,675 705,680 702,673 708,661 722,653 724,640 721,628 712,620 714,615 722,619 735,635 747,637 752,628 750,610 747,598";
const project = (pts, ox, oy, sx, sy) =>
  pts.split(" ").map((p) => {
    const [x, y] = p.split(",").map(Number);
    return `${(ox + x / sx).toFixed(1)} ${(oy + y / sy).toFixed(1)}`;
  }).join("L");
const cityPath =
  "M" + [project(north, 770, 140, 3, 2.8), project(east, 1120, 560, 3, 3), project(south, 900, 640, 2.6133, 3), project(west, 770, 140, 3, 2.8)].join("L") +
  "ZM" + project(lake, 1120, 560, 3, 3) + "Z";

/* ---------- content ---------- */
const menus = [["プロジェクト(J)", 83, 98], ["編集(E)", 47, 63], ["ビュー(V)", 52, 67], ["レイヤ(L)", 52, 68], ["設定(S)", 48, 63], ["プラグイン(P)", 74, 89], ["ベクタ(O)", 53, 67], ["ラスタ(R)", 51, 66], ["データベース(D)", 89, 103], ["Web(W)", 48, 62], ["プロセッシング(C)", 98, 113], ["ヘルプ(H)", 55, 60]];
const row1 = ["newDoc", "open", "save", "saveAs", "composer", "manager", "|", "*touch", "hand", "panSel", "zoomIn", "zoomOut", "zoomOne", "zoomFull", "zoomSel", "zoomLayer", "zoomLast", "zoomNext", "bookNew", "book", "refresh", "|", "identify", "action", "v-", "select", "v", "selExp", "v", "deselect", "table", "abacus", "sigma", "measure", "v", "tip", "textAnn", "v", "|", "help"];
const row2 = ["edits", "pencil", "saveEdits", "addFeat", "addCurve", "v-", "moveFeat", "node", "trash", "cut", "copy", "paste", "|", "label", "diagram", "labelPin", "labelPinG", "labelEye", "labelMove", "labelRot", "labelEdit", "|", "csw", "|", "python"];
const side = [["vPlus"], ["raster"], ["featherPlus"], ["pgPlus", 1], ["globePlus", 1], ["gridPlus"], ["wfsPlus", 1], ["comma"], ["vBox"], ["vNew", 1]];
const tree = [
  ["folder", "ホーム", 36, 1, 1], ["star", "お気に入り", 65, 0, 2], ["folder", "C:/", 21, 1, 1],
  ["db2", "DB2", 27], ["mssql", "MSSQL", 48], ["oracle", "Oracle", 41], ["pg", "PostGIS", 51], ["feather", "SpatiaLite", 62],
  ["arcF", "ArcGisFeatureServer", 134], ["arcM", "ArcGisMapServer", 110], ["ows", "OWS", 30, 1], ["globe", "Tile Server (XYZ)", 112],
  ["wcs", "WCS", 29], ["wfs", "WFS", 28], ["globe", "WMS", 30, 1],
];
const popup = [
  ["レイヤの領域にズームする(Z)", 204, "zoomLayer"], ["全体図に表示(S)", 114, "check"], ["削除(R)", 54, "remove"], ["複製する(D)", 85, "dup"],
  ["レイヤを表示する縮尺を設定する(S)", 249], ["レイヤCRSの設定", 121], ["レイヤのCRSをプロジェクトのCRSに設定(P)", 308], ["スタイル", 61, "sub"], null,
  ["属性テーブルを開く(O)", 160, "table"], ["編集モード切替", 105, "pencil"], ["名前をつけて保存する...", 165], ["レイヤ定義ファイルとして保存する...", 255],
  ["フィルター(F)...", 113], ["地物の数を表示する", 135, "check"], null, ["プロパティ (P)", 103, "on"], ["名前を変更する(N)", 130],
];

const Tools = ({ items }) =>
  items.map((n, i) => {
    if (n === "|") return <Handle key={i} />;
    if (n[0] === "v" && n.length < 3) return <Drop key={i} $c={n === "v-" ? "#888" : "#000"} />;
    if (n[0] === "*") return <Tool key={i}><ToolActive><Icon n={n.slice(1)} s={22} /></ToolActive></Tool>;
    return <Tool key={i}><Icon n={n} s={n === "refresh" ? 22 : 23} /></Tool>;
  });
const Cross = ({ s = 12, w = 3.200 }) => (
  <svg width={s} height={s} viewBox="0 0 12 12"><path d="M1.500 1.500l9 9M10.500 1.500l-9 9" stroke="#000" strokeWidth={w} /></svg>
);
const SpinButtons = () => <Spin><SpinHalf $up /><SpinHalf /></Spin>;

export default function App() {
  return (
    <Window>
      <Global />
      <TitleBar>
        <Smudge $x={0} $y={0} $w={125} $h={24} $c="#fff" $o={0.4} />
        <Smudge $x={175} $y={14} $w={30} $c="#a77" />
        <Smudge $x={252} $y={-6} $w={9} $h={18} $c="#201c20" $o={0.6} $skew={-20} />
        <Smudge $x={274} $w={13} $c="#234a7a" $o={0.6} />
        <Smudge $x={304} $y={14} $w={150} $h={9} $o={0.2} />
        <Smudge $x={493} $y={-6} $w={9} $h={18} $c="#201c20" $o={0.7} $skew={-20} />
        <Smudge $x={511} $w={18} $c="#222" $o={0.55} />
        <Smudge $x={538} $y={13} $w={152} $h={10} $o={0.25} />
        <Smudge $x={715} $y={13} $w={9} $h={9} />
        <Smudge $x={752} $y={9} $w={26} $h={20} $c="#aaa" $o={0.6} $skew={20} />
        <Smudge $x={1700} $y={2} $w={80} $h={18} $c="#9a9a98" $o={0.4} />
        <TitleLabel>
          <svg width="16" height="23" viewBox="0 0 16 23">
            <path d="M8 3q6-1 6 6 0 7-6 10-6 1-6-5Q2 6 8 3z" fill="none" stroke="#b9d436" strokeWidth="3.500" />
            <path d="M15 1L9 4l2 1-7 12 8-10 1 2z" fill="#2b7a2b" stroke="#195019" strokeWidth=".8" />
            <path d="M1 18h6M4 15v6" stroke="#194f19" strokeWidth="1.200" />
          </svg>
          <TitleText><Fit w={95}>QGIS2.18.14</Fit></TitleText>
        </TitleLabel>
        <WinButtons>
          <WinButton $w={35}><svg width="17" height="18"><rect x="1" y="11.500" width="15" height="4" fill="#fff" stroke="#555a70" /></svg></WinButton>
          <WinButton $w={33}><svg width="18" height="18"><path d="M4.500 1.500h12v11h-12z" fill="#eee" stroke="#555a70" /><path d="M1.500 4.500h12v12h-12z" fill="#fff" stroke="#555a70" /><rect x="5" y="8" width="5" height="5" fill="#888" stroke="#555a70" /></svg></WinButton>
          <WinButton $w={60} $red><svg width="18" height="16"><path d="M2.500 1.500h4.500l2 3 2-3h4.500l-4.300 6.300 4.300 6.700h-4.500l-2-3.500-2 3.500H2.500l4.300-6.700z" fill="#fff" stroke="#555a70" /></svg></WinButton>
        </WinButtons>
      </TitleBar>
      <MenuBar>
        {menus.map(([t, w, box]) => <MenuItem key={t} $w={box}><Fit w={w} palt>{t}</Fit></MenuItem>)}
      </MenuBar>
      <Toolbar><Handle $first /><Tools items={row1} /></Toolbar>
      <Toolbar><Handle $first /><Tools items={row2} /></Toolbar>
      <Body>
        <SideBar>
          <HGrip $w={48} />
          {side.map(([n, dd]) => <SideTool key={n}><Icon n={n} s={24} />{dd && <Drop />}</SideTool>)}
          <HGrip $w={48} $mt={9} />
        </SideBar>
        <Docks>
          <DockTitle>
            <HGrip /><Fit w={72} palt>ブラウザパネル</Fit><HGrip />
            <DockButtons>
              <DockButton><svg width="8" height="8"><path d="M2.500 2.500v-2h5v5h-2M.5 2.500h5v5h-5zM.5 3.500h5" fill="none" stroke="#000" /></svg></DockButton>
              <DockButton><Cross s={9} w={2} /></DockButton>
            </DockButtons>
          </DockTitle>
          <DockTools $h={33} $pt={1}>
            {["addSel", "refresh", "funnel", "treeUp", "info"].map((n) => <Icon key={n} n={n} s={15} w={16} />)}
          </DockTools>
          <Tree $h={518}>
            {tree.map(([icon, text, w, exp, kind], i) => (
              <TreeRow key={text} $h={i < 3 ? 18.200 : 20}>
                <Branch $first={i === 0} $last={i === tree.length - 1}>{exp ? <Expander /> : null}</Branch>
                <IconCell $w={kind === 1 ? 21 : kind === 2 ? 24 : 26}><Icon n={icon} s={kind === 1 ? 16 : 19} w={kind === 1 ? 14 : 20} /></IconCell>
                <TreeText $drop={i < 3}><Fit w={w} palt>{text}</Fit></TreeText>
              </TreeRow>
            ))}
          </Tree>
          <Splitter><HGrip $w={88} /></Splitter>
          <DockTitle $h={15}>
            <HGrip /><Fit w={63} palt>レイヤパネル</Fit><HGrip />
            <Spacer $w={23} />
          </DockTitle>
          <DockTools $h={34} $pt={4}>
            {["brush", "group", "eye", "funnel", "eps"].map((n) => <Icon key={n} n={n} s={16} />)}
            <Drop $w={10} $ml={-5} />
            <Icon n="treeDown" s={16} /><Icon n="treeUp" s={16} />
          </DockTools>
          <Tree $h={359} $focus>
            <LayerRow>
              <LayerBranch />
              <CheckX><Cross /></CheckX>
              <Swatch />
              <LayerName><Fit w={114}>takarazuka-city</Fit></LayerName>
            </LayerRow>
          </Tree>
        </Docks>
        <VSplit />
        <MapFrame>
          <svg width="1577" height="985" viewBox="342 132 1577 985">
            <path d={cityPath} fill="#85cd0a" fillRule="evenodd" stroke="#111" strokeWidth="1.300" strokeLinejoin="round" />
          </svg>
        </MapFrame>
      </Body>
      <StatusBar>
        <Fit w={29}>座標</Fit><Spacer $w={5} />
        <Field $w={277} $pl={78}><Fit w={114}>135.1896,34.8445</Fit></Field><Spacer $w={5} />
        <Icon n="tools" s={20} w={19} /><Spacer $w={15} />
        <Fit w={28}>縮尺</Fit><Spacer $w={4} />
        <Field $w={87} $join><Fit w={54}>1:65,206</Fit></Field><Combo /><Spacer $w={8} />
        <Icon n="lock" s={20} w={16} /><Spacer $w={16} />
        <Fit w={29}>拡大</Fit><Spacer $w={4} />
        <Field $w={68} $join><Fit w={33}>100%</Fit></Field><SpinButtons /><Spacer $w={9} />
        <Fit w={29}>回転</Fit><Spacer $w={10} />
        <Field $w={68} $join><Fit w={20}>0.0</Fit></Field><SpinButtons /><Spacer $w={6} />
        <CheckX $b="#bbb"><Cross /></CheckX><Spacer $w={6} />
        <Fit w={32} palt>レンダ</Fit><Spacer $w={20} />
        <Icon n="crs" s={20} /><Spacer $w={4} />
        <Fit w={70}>EPSG:4019</Fit><Spacer $w={27} />
        <Icon n="msg" s={20} />
      </StatusBar>
      <Popup>
        {popup.map((it, i) => {
          if (!it) return <PopupSep key={i} $up={i < 10} />;
          const [t, w, k] = it;
          const isIcon = k && ICONS[k];
          return (
            <PopupRow key={i} $tall={i < 4 || i === 9 || i === 10} $on={k === "on"}>
              <PopupIcon $check={k === "check"}>{isIcon ? <Icon n={k} s={19} w={18} /> : k === "check" ? <PopupCheck /> : null}</PopupIcon>
              <Fit w={w}>{t}</Fit>
              {k === "sub" && <SubArrow />}
            </PopupRow>
          );
        })}
      </Popup>
    </Window>
  );
}
